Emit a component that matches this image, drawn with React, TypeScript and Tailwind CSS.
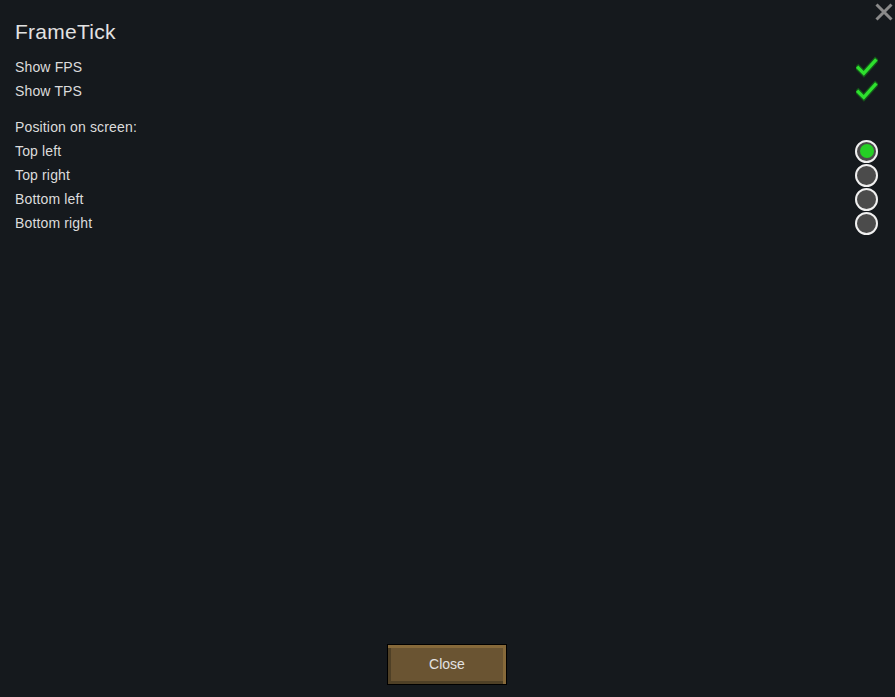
import { useState } from 'react'

const positions = ['Top left', 'Top right', 'Bottom left', 'Bottom right']

function Check() {
  return (
    <svg width="24" height="22" viewBox="0 0 24 22" className="block">
      <path d="M2.5 12 L8.5 18 L21 4" fill="none" stroke="#14561a" strokeWidth="6.5" strokeLinejoin="miter" strokeLinecap="square" />
      <path d="M2.5 12 L8.5 18 L21 4" fill="none" stroke="#2ee02e" strokeWidth="3.6" strokeLinejoin="miter" strokeLinecap="square" />
    </svg>
  )
}

function Radio({ on }: { on: boolean }) {
  return (
    <div className="w-[23px] h-[23px] rounded-full border-2 border-[#f0f0f0] bg-[#4b4b4b] flex items-center justify-center">
      {on && <div className="w-[14px] h-[14px] rounded-full bg-[#25cf25]" />}
    </div>
  )
}

export default function App() {
  const [selected, setSelected] = useState('Top left')
  const [fps, setFps] = useState(true)
  const [tps, setTps] = useState(true)

  return (
    <div
      className="relative h-screen w-full bg-[#15191d] text-[#dcdcdc] flex flex-col overflow-hidden"
      style={{ fontFamily: '"Liberation Sans", Arial, sans-serif' }}
    >
      {/* close X */}
      <button className="absolute top-[3px] right-[2px] w-[18px] h-[18px]">
        <svg width="18" height="18" viewBox="0 0 18 18" className="block">
          <path d="M1.5 1.5 L16.5 16.5 M16.5 1.5 L1.5 16.5" stroke="#8a8a8a" strokeWidth="3" />
        </svg>
      </button>

      <div className="pl-[15px] pr-[17px] pt-[18px] tracking-[0.15px]">
        <h1 className="text-[21px] leading-[28px] text-[#e2e2e2] mb-[9px] tracking-[0.25px]">FrameTick</h1>

        <div className="flex items-center justify-between h-6 text-[14px] cursor-pointer" onClick={() => setFps(!fps)}>
          <span>Show FPS</span>
          <div className="w-[22px] flex justify-center">{fps && <Check />}</div>
        </div>
        <div className="flex items-center justify-between h-6 text-[14px] cursor-pointer" onClick={() => setTps(!tps)}>
          <span>Show TPS</span>
          <div className="w-[22px] flex justify-center">{tps && <Check />}</div>
        </div>

        <div className="h-6 mt-3 flex items-center text-[14px]">Position on screen:</div>
        {positions.map((p) => (
          <div
            key={p}
            className="flex items-center justify-between h-6 text-[14px] cursor-pointer"
            onClick={() => setSelected(p)}
          >
            <span>{p}</span>
            <Radio on={selected === p} />
          </div>
        ))}
      </div>

      <div className="mt-auto mb-[12px] flex justify-center pr-px">
        <button className="w-[120px] h-[41px] border border-black bg-[#6a5432] text-[14px] leading-[37px] text-[#e2e2e2] shadow-[inset_0_3px_0_#86693a,inset_-3px_0_0_#86693a,inset_3px_0_0_#4f4026,inset_0_-3px_0_#4f4026]">
          Close
        </button>
      </div>
    </div>
  )
}
